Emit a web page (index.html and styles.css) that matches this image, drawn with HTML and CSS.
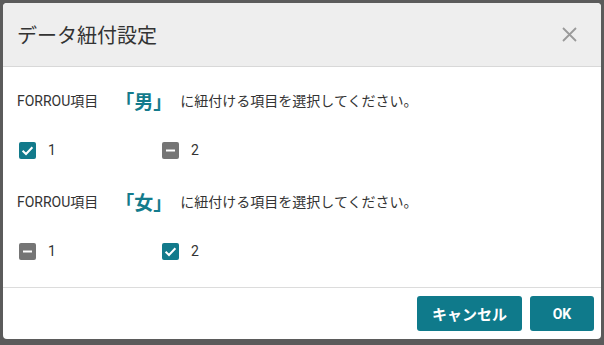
FILE: index.html
```html
<!DOCTYPE html>
<html lang="ja">
<head>
<meta charset="utf-8">
<title>データ紐付設定</title>
<link rel="stylesheet" href="styles.css">
</head>
<body>
<div class="backdrop">
  <div class="dialog">
    <div class="dialog-header">
      <h1 class="dialog-title">データ紐付設定</h1>
      <button class="close-btn" aria-label="閉じる">
        <svg width="15" height="15" viewBox="0 0 15 15"><path d="M1 1L14 14M14 1L1 14" stroke="#9a9a9a" stroke-width="1.8" fill="none"/></svg>
      </button>
    </div>
    <div class="dialog-body">
      <p class="prompt"><span class="src">FORROU項目</span><span class="key">「男」</span><span class="rest">に紐付ける項目を選択してください。</span></p>
      <div class="options">
        <label class="option"><span class="box checked"><svg width="17" height="17" viewBox="0 0 17 17"><path d="M3.6 8.8L7 12L13.4 5.2" stroke="#fff" stroke-width="2" fill="none"/></svg></span><span class="opt-label">1</span></label>
        <label class="option"><span class="box mixed"><svg width="17" height="17" viewBox="0 0 17 17"><path d="M4 8.5H13" stroke="#fff" stroke-width="2.2" fill="none"/></svg></span><span class="opt-label">2</span></label>
      </div>
      <p class="prompt second"><span class="src">FORROU項目</span><span class="key">「女」</span><span class="rest">に紐付ける項目を選択してください。</span></p>
      <div class="options">
        <label class="option"><span class="box mixed"><svg width="17" height="17" viewBox="0 0 17 17"><path d="M4 8.5H13" stroke="#fff" stroke-width="2.2" fill="none"/></svg></span><span class="opt-label">1</span></label>
        <label class="option"><span class="box checked"><svg width="17" height="17" viewBox="0 0 17 17"><path d="M3.6 8.8L7 12L13.4 5.2" stroke="#fff" stroke-width="2" fill="none"/></svg></span><span class="opt-label">2</span></label>
      </div>
    </div>
    <div class="dialog-footer">
      <button class="btn">キャンセル</button>
      <button class="btn ok">OK</button>
    </div>
  </div>
</div>
</body>
</html>
```
FILE: styles.css
```css
html, body {
  margin: 0;
  padding: 0;
}
body {
  background: #5b5b5b;
  font-family: Roboto, "Noto Sans CJK JP", sans-serif;
  color: #333;
  width: 604px;
  height: 345px;
  overflow: hidden;
}
.backdrop {
  padding: 3px 3px 0 3px;
}
.dialog {
  width: 598px;
  height: 336px;
  background: #fff;
  border-radius: 4px;
  overflow: hidden;
  display: flex;
  flex-direction: column;
}
.dialog-header {
  height: 64px;
  background: #eeeeee;
  border-bottom: 1px solid #d8d8d8;
  display: flex;
  align-items: center;
  justify-content: space-between;
  padding: 0 24px 0 14px;
  box-sizing: border-box;
  flex: none;
}
.dialog-title {
  margin: 0;
  font-size: 20px;
  font-weight: normal;
  color: #333;
  font-family: "Noto Sans CJK JP", sans-serif;
}
.close-btn {
  border: 0;
  background: none;
  padding: 0;
  width: 15px;
  height: 15px;
  display: block;
}
.close-btn svg { display: block; }
.dialog-body {
  flex: 1;
  padding: 21px 14px 0 14px;
  border-bottom: 1px solid #dcdcdc;
}
.prompt {
  margin: 0;
  height: 24px;
  display: flex;
  align-items: center;
  font-size: 14px;
}
.prompt.second {
  margin-top: 30px;
}
.src {
  font-size: 14px;
}
.key {
  font-size: 19px;
  font-weight: bold;
  color: #137b8c;
  margin: 0 8px 0 17px;
  font-family: "Noto Sans CJK JP", sans-serif;
}
.rest {
  font-family: "Noto Sans CJK JP", sans-serif;
  font-size: 14px;
}
.options {
  display: flex;
  margin-top: 29px;
  padding-left: 2px;
  height: 18px;
  align-items: center;
}
.option {
  width: 143px;
  display: flex;
  align-items: center;
}
.box {
  width: 17px;
  height: 17px;
  border-radius: 2px;
  display: block;
}
.box svg { display: block; }
.box.checked { background: #127a8b; }
.box.mixed { background: #757575; }
.opt-label {
  margin-left: 12px;
  font-size: 14px;
  color: #333;
}
.dialog-footer {
  height: 51px;
  flex: none;
  display: flex;
  justify-content: flex-end;
  align-items: flex-start;
  padding: 8px 7px 0 0;
  box-sizing: border-box;
  gap: 8px;
}
.btn {
  height: 35px;
  border: 0;
  border-radius: 3px;
  background: #0f7a8b;
  color: #fff;
  font-family: Roboto, "Noto Sans CJK JP", sans-serif;
  font-weight: bold;
  font-size: 15px;
  padding: 0 15px;
}
.btn.ok {
  width: 64px;
  padding: 0;
  font-size: 14px;
}
```
